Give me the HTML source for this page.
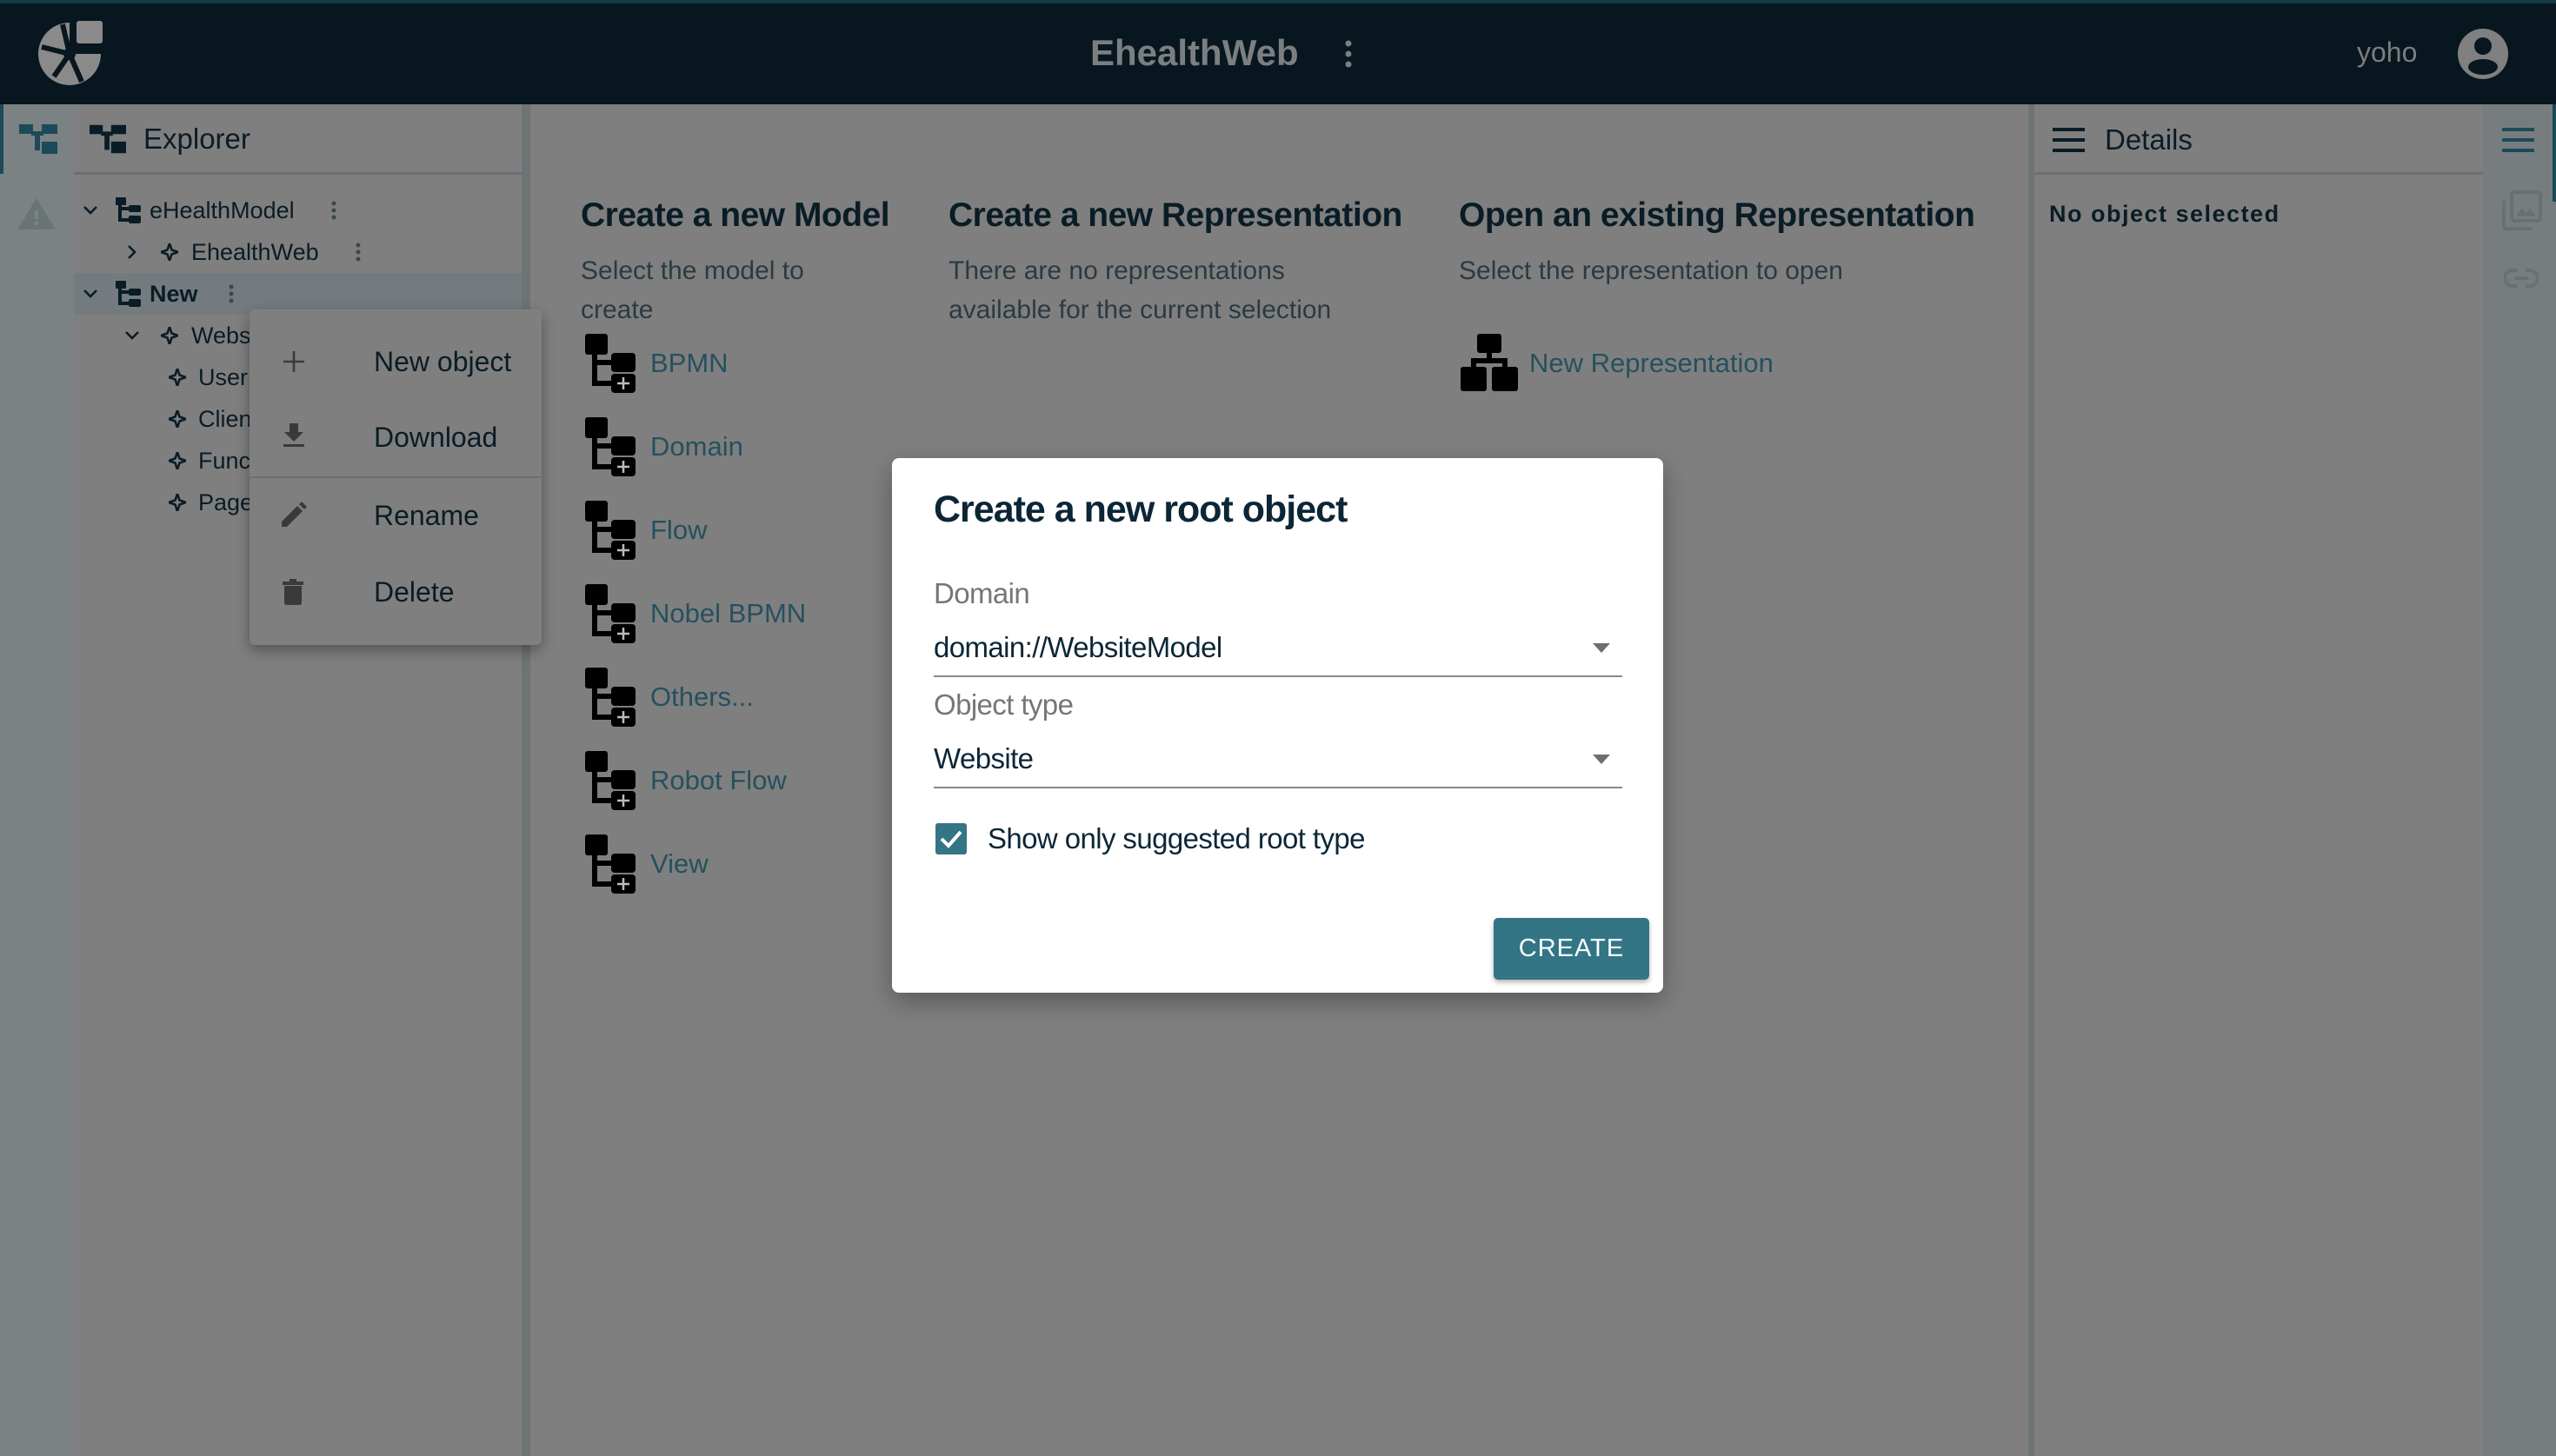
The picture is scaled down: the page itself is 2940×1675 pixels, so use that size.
<!DOCTYPE html>
<html><head><meta charset="utf-8"><style>
*{margin:0;padding:0;box-sizing:border-box}
body{width:2940px;height:1675px;overflow:hidden;background:#7f7f7f;font-family:"Liberation Sans",sans-serif;position:relative}
.abs{position:absolute}
.hdr{left:0;top:0;width:2940px;height:120px;background:#08161f;border-top:4px solid #163a45}
.t{position:absolute;white-space:nowrap;line-height:1}
.mi{font-size:32px;color:#0a1c26}
.tree{font-size:27px;color:#0a1c26}
.link{color:#25505e;font-size:31px}
.sub{color:#2b3a42;font-size:30px;line-height:45px;white-space:normal}
.h2{font-size:39px;font-weight:bold;color:#0a1c26;letter-spacing:-0.5px}
.dlg{font-size:33px;letter-spacing:-0.6px}
</style></head><body>
<div class="abs hdr"></div>
<svg class="abs" style="left:44px;top:22px" width="80" height="80" viewBox="0 0 80 80">
<path d="M36 4 A36 36 0 1 0 72 40 L36 40 Z" fill="#8a8a8a"/>
<rect x="44" y="2" width="30" height="26" rx="3" fill="#8a8a8a"/>
<path d="M36 40 L4 32 M36 40 L18 66 M36 40 L50 72 M36 40 L28 6" stroke="#08161f" stroke-width="6"/>
<circle cx="36" cy="40" r="7" fill="#08161f"/>
</svg>
<div class="t" style="left:1254px;top:40px;font-size:42px;font-weight:bold;color:#7b7f81">EhealthWeb</div>
<svg class="abs" style="left:1543px;top:46px" width="16" height="34"><circle cx="8" cy="4" r="3.5" fill="#7b7f81"/><circle cx="8" cy="16" r="3.5" fill="#7b7f81"/><circle cx="8" cy="28" r="3.5" fill="#7b7f81"/></svg>
<div class="t" style="left:2711px;top:44px;font-size:32px;color:#7d7d7d">yoho</div>
<svg class="abs" style="left:2826px;top:32px" width="60" height="60" viewBox="0 0 60 60"><circle cx="30" cy="30" r="29" fill="#808080"/><circle cx="30" cy="21" r="10" fill="#08161f"/><ellipse cx="30" cy="45" rx="17" ry="9" fill="#08161f"/></svg>

<div class="abs" style="left:0;top:120px;width:85px;height:1555px;background:#7b8284"></div>
<div class="abs" style="left:0;top:120px;width:4px;height:80px;background:#1d4a58"></div>
<svg class="abs" style="left:22px;top:143px" width="44" height="34" viewBox="0 0 44 34"><rect x="0" y="0" width="16" height="11" fill="#1d4a58"/><rect x="26" y="0" width="18" height="11" fill="#1d4a58"/><rect x="18" y="8" width="6" height="22" fill="#1d4a58"/><rect x="14" y="8" width="14" height="5" fill="#1d4a58"/><rect x="26" y="20" width="18" height="14" fill="#1d4a58"/></svg>
<svg class="abs" style="left:20px;top:228px" width="44" height="36" viewBox="0 0 44 36"><path d="M22 0 L44 36 L0 36 Z" fill="#6a7375"/><rect x="20" y="14" width="4" height="10" fill="#7b8284"/><rect x="20" y="27" width="4" height="4" fill="#7b8284"/></svg>

<div class="abs" style="left:600px;top:120px;width:10px;height:1555px;background:#6e7375"></div>
<div class="abs" style="left:85px;top:198px;width:515px;height:3px;background:#6b7072"></div>
<svg class="abs" style="left:103px;top:143px" width="42" height="34" viewBox="0 0 44 34"><rect x="0" y="0" width="16" height="11" fill="#0a1c26"/><rect x="26" y="0" width="18" height="11" fill="#0a1c26"/><rect x="18" y="8" width="6" height="22" fill="#0a1c26"/><rect x="14" y="8" width="14" height="5" fill="#0a1c26"/><rect x="26" y="20" width="18" height="14" fill="#0a1c26"/></svg>
<div class="t" style="left:165px;top:143px;font-size:33px;color:#0a1c26">Explorer</div>
<div class="abs" style="left:85px;top:314px;width:515px;height:48px;background:#737b7e"></div>

<svg width="0" height="0" style="position:absolute"><defs>
<g id="ti"><rect x="0" y="0" width="12" height="9" rx="1"/><rect x="3" y="6" width="4" height="22"/><rect x="5" y="11" width="12" height="4"/><rect x="5" y="24" width="12" height="4"/><rect x="15" y="9" width="14" height="8" rx="2"/><rect x="15" y="21" width="14" height="9" rx="2"/></g>
<path id="star" d="M10 0 L12.5 7.5 L20 10 L12.5 12.5 L10 20 L7.5 12.5 L0 10 L7.5 7.5 Z" fill="none" stroke="#0a1c26" stroke-width="2.6" stroke-linejoin="round"/>
<g id="mi"><rect x="2" y="0" width="26" height="24" rx="3"/><rect x="10" y="20" width="6" height="40"/><rect x="14" y="30" width="22" height="6"/><rect x="14" y="54" width="22" height="6"/><rect x="32" y="22" width="28" height="22" rx="4"/><rect x="32" y="46" width="28" height="22" rx="4"/><path d="M46 50 v14 M39 57 h14" stroke="#bbb" stroke-width="2.5"/></g>
</defs></svg>

<svg class="abs" style="left:94px;top:232px" width="20" height="20" viewBox="0 0 20 20"><path d="M3 6 L10 13 L17 6" fill="none" stroke="#0a1c26" stroke-width="2.6"/></svg>
<svg class="abs" style="left:133px;top:227px" width="30" height="30" fill="#0a1c26"><use href="#ti"/></svg>
<div class="t tree" style="left:172px;top:229px">eHealthModel</div>
<svg class="abs" style="left:380px;top:230px" width="8" height="26"><circle cx="4" cy="4" r="2.5" fill="#3a474d"/><circle cx="4" cy="12" r="2.5" fill="#3a474d"/><circle cx="4" cy="20" r="2.5" fill="#3a474d"/></svg>

<svg class="abs" style="left:142px;top:280px" width="20" height="20" viewBox="0 0 20 20"><path d="M6 3 L13 10 L6 17" fill="none" stroke="#0a1c26" stroke-width="2.6"/></svg>
<svg class="abs" style="left:185px;top:280px" width="20" height="20"><use href="#star"/></svg>
<div class="t tree" style="left:220px;top:277px">EhealthWeb</div>
<svg class="abs" style="left:408px;top:278px" width="8" height="26"><circle cx="4" cy="4" r="2.5" fill="#3a474d"/><circle cx="4" cy="12" r="2.5" fill="#3a474d"/><circle cx="4" cy="20" r="2.5" fill="#3a474d"/></svg>

<svg class="abs" style="left:94px;top:328px" width="20" height="20" viewBox="0 0 20 20"><path d="M3 6 L10 13 L17 6" fill="none" stroke="#0a1c26" stroke-width="2.6"/></svg>
<svg class="abs" style="left:133px;top:323px" width="30" height="30" fill="#0a1c26"><use href="#ti"/></svg>
<div class="t tree" style="left:172px;top:325px;font-weight:bold">New</div>
<svg class="abs" style="left:262px;top:326px" width="8" height="26"><circle cx="4" cy="4" r="2.5" fill="#3a474d"/><circle cx="4" cy="12" r="2.5" fill="#3a474d"/><circle cx="4" cy="20" r="2.5" fill="#3a474d"/></svg>

<svg class="abs" style="left:142px;top:376px" width="20" height="20" viewBox="0 0 20 20"><path d="M3 6 L10 13 L17 6" fill="none" stroke="#0a1c26" stroke-width="2.6"/></svg>
<svg class="abs" style="left:185px;top:376px" width="20" height="20"><use href="#star"/></svg>
<div class="t tree" style="left:220px;top:373px">Webs</div>
<svg class="abs" style="left:194px;top:424px" width="20" height="20"><use href="#star"/></svg>
<div class="t tree" style="left:228px;top:421px">User</div>
<svg class="abs" style="left:194px;top:472px" width="20" height="20"><use href="#star"/></svg>
<div class="t tree" style="left:228px;top:469px">Clien</div>
<svg class="abs" style="left:194px;top:520px" width="20" height="20"><use href="#star"/></svg>
<div class="t tree" style="left:228px;top:517px">Func</div>
<svg class="abs" style="left:194px;top:568px" width="20" height="20"><use href="#star"/></svg>
<div class="t tree" style="left:228px;top:565px">Page</div>

<div class="abs" style="left:287px;top:356px;width:336px;height:386px;background:#7f7f7f;border-radius:6px;box-shadow:0 6px 16px rgba(0,0,0,0.35)"></div>
<div class="abs" style="left:287px;top:548px;width:336px;height:2px;background:#6e6e6e"></div>
<svg class="abs" style="left:325px;top:403px" width="26" height="26"><path d="M13 1 V25 M1 13 H25" stroke="#3a3a3a" stroke-width="2.6"/></svg>
<div class="t mi" style="left:430px;top:400px">New object</div>
<svg class="abs" style="left:325px;top:487px" width="26" height="28"><path d="M8 0 H18 V10 H24 L13 21 L2 10 H8 Z" fill="#3a3a3a"/><rect x="1" y="24" width="24" height="3" fill="#3a3a3a"/></svg>
<div class="t mi" style="left:430px;top:487px">Download</div>
<svg class="abs" style="left:322px;top:576px" width="32" height="32" viewBox="0 0 32 32"><path d="M2 24 L2 30 L8 30 L26 12 L20 6 Z M22 4 L25 1 L31 7 L28 10 Z" fill="#3a3a3a"/></svg>
<div class="t mi" style="left:430px;top:577px">Rename</div>
<svg class="abs" style="left:325px;top:666px" width="24" height="30"><rect x="0" y="3" width="24" height="4" fill="#3a3a3a"/><rect x="8" y="0" width="8" height="4" fill="#3a3a3a"/><path d="M2 8 H22 V27 Q22 30 19 30 H5 Q2 30 2 27 Z" fill="#3a3a3a"/></svg>
<div class="t mi" style="left:430px;top:665px">Delete</div>

<div class="t h2" style="left:668px;top:228px">Create a new Model</div>
<div class="t sub" style="left:668px;top:289px;width:300px">Select the model to create</div>
<div class="t h2" style="left:1091px;top:228px">Create a new Representation</div>
<div class="t sub" style="left:1091px;top:289px;width:500px">There are no representations available for the current selection</div>
<div class="t h2" style="left:1678px;top:228px">Open an existing Representation</div>
<div class="t sub" style="left:1678px;top:289px;width:620px">Select the representation to open</div>

<svg class="abs" style="left:671px;top:384px" width="60" height="68" fill="#000"><use href="#mi"/></svg><div class="t link" style="left:748px;top:402px">BPMN</div>
<svg class="abs" style="left:671px;top:480px" width="60" height="68" fill="#000"><use href="#mi"/></svg><div class="t link" style="left:748px;top:498px">Domain</div>
<svg class="abs" style="left:671px;top:576px" width="60" height="68" fill="#000"><use href="#mi"/></svg><div class="t link" style="left:748px;top:594px">Flow</div>
<svg class="abs" style="left:671px;top:672px" width="60" height="68" fill="#000"><use href="#mi"/></svg><div class="t link" style="left:748px;top:690px">Nobel BPMN</div>
<svg class="abs" style="left:671px;top:768px" width="60" height="68" fill="#000"><use href="#mi"/></svg><div class="t link" style="left:748px;top:786px">Others...</div>
<svg class="abs" style="left:671px;top:864px" width="60" height="68" fill="#000"><use href="#mi"/></svg><div class="t link" style="left:748px;top:882px">Robot Flow</div>
<svg class="abs" style="left:671px;top:960px" width="60" height="68" fill="#000"><use href="#mi"/></svg><div class="t link" style="left:748px;top:978px">View</div>

<svg class="abs" style="left:1680px;top:384px" width="66" height="66" viewBox="0 0 66 66"><rect x="19" y="0" width="28" height="22" rx="3"/><rect x="30" y="20" width="6" height="12"/><rect x="12" y="28" width="42" height="6"/><rect x="12" y="28" width="6" height="14"/><rect x="48" y="28" width="6" height="14"/><rect x="0" y="38" width="30" height="28" rx="3"/><rect x="36" y="38" width="30" height="28" rx="3"/></svg>
<div class="t link" style="left:1759px;top:402px">New Representation</div>

<div class="abs" style="left:2333px;top:120px;width:7px;height:1555px;background:#6e7375"></div>
<div class="abs" style="left:2340px;top:198px;width:516px;height:3px;background:#6b7072"></div>
<svg class="abs" style="left:2361px;top:147px" width="37" height="28"><rect y="0" width="37" height="4" fill="#0a1c26"/><rect y="12" width="37" height="4" fill="#0a1c26"/><rect y="24" width="37" height="4" fill="#0a1c26"/></svg>
<div class="t" style="left:2421px;top:144px;font-size:33px;color:#0a1c26">Details</div>
<div class="t" style="left:2357px;top:233px;font-size:27px;font-weight:bold;letter-spacing:1.5px;color:#0a1c26">No object selected</div>
<div class="abs" style="left:2856px;top:120px;width:84px;height:1555px;background:#777d7f"></div>
<div class="abs" style="left:2936px;top:120px;width:4px;height:112px;background:#1d4a58"></div>
<svg class="abs" style="left:2878px;top:147px" width="37" height="28"><rect y="0" width="37" height="4" fill="#1d4a58"/><rect y="12" width="37" height="4" fill="#1d4a58"/><rect y="24" width="37" height="4" fill="#1d4a58"/></svg>
<svg class="abs" style="left:2878px;top:219px" width="46" height="46" viewBox="0 0 46 46"><rect x="11" y="2" width="33" height="33" rx="3" fill="none" stroke="#697073" stroke-width="4"/><path d="M2 12 V42 Q2 44 4 44 H34" fill="none" stroke="#697073" stroke-width="4"/><path d="M16 30 L23 20 L28 26 L32 21 L39 30 Z" fill="#697073"/></svg>
<svg class="abs" style="left:2880px;top:308px" width="40" height="24" viewBox="0 0 40 24"><path d="M15 3 H10 A9 9 0 0 0 10 21 H15 M25 3 H30 A9 9 0 0 1 30 21 H25 M12 12 H28" fill="none" stroke="#697073" stroke-width="4"/></svg>

<div class="abs" style="left:1026px;top:527px;width:887px;height:615px;background:#fff;border-radius:8px;box-shadow:0 10px 30px rgba(0,0,0,0.3)"></div>
<div class="t" style="left:1074px;top:565px;font-size:43px;font-weight:bold;color:#0c2636;letter-spacing:-1px">Create a new root object</div>
<div class="t dlg" style="left:1074px;top:666px;color:#767676">Domain</div>
<div class="t dlg" style="left:1074px;top:728px;color:#0c2636">domain://WebsiteModel</div>
<svg class="abs" style="left:1832px;top:740px" width="20" height="12"><path d="M0 0 H20 L10 11 Z" fill="#6e6e6e"/></svg>
<div class="abs" style="left:1074px;top:777px;width:792px;height:2px;background:#8a8a8a"></div>
<div class="t dlg" style="left:1074px;top:794px;color:#767676">Object type</div>
<div class="t dlg" style="left:1074px;top:856px;color:#0c2636">Website</div>
<svg class="abs" style="left:1832px;top:868px" width="20" height="12"><path d="M0 0 H20 L10 11 Z" fill="#6e6e6e"/></svg>
<div class="abs" style="left:1074px;top:905px;width:792px;height:2px;background:#8a8a8a"></div>
<svg class="abs" style="left:1076px;top:947px" width="36" height="36" viewBox="0 0 36 36"><rect width="36" height="36" rx="3" fill="#337585"/><path d="M7 18 L15 26 L29 10" fill="none" stroke="#fff" stroke-width="4"/></svg>
<div class="t dlg" style="left:1136px;top:948px;color:#0c2636">Show only suggested root type</div>
<div class="abs" style="left:1718px;top:1056px;width:179px;height:71px;background:#337585;border-radius:5px;box-shadow:0 3px 6px rgba(0,0,0,0.3)"></div>
<div class="t" style="left:1718px;top:1077px;width:179px;text-align:center;font-size:29px;color:#fff;letter-spacing:1px">CREATE</div>
</body></html>
